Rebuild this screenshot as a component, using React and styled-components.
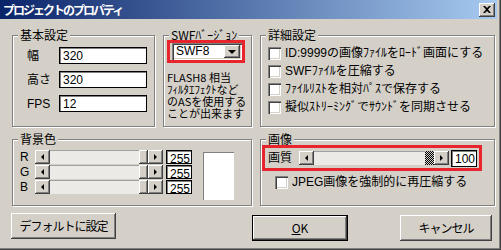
import React from "react";
import styled, { createGlobalStyle, css } from "styled-components";

const GlobalStyle = createGlobalStyle`
  html, body {
    margin: 0;
    padding: 0;
    background: #d4d0c8;
  }
  body {
    font-family: "Liberation Sans", "Noto Sans CJK JP", sans-serif;
    font-size: 12px;
    color: #000;
  }
  * {
    box-sizing: border-box;
  }
`;

const raised = css`
  background: #d4d0c8;
  box-shadow: inset -1px -1px 0 #404040, inset 1px 1px 0 #fff,
    inset -2px -2px 0 #808080, inset 2px 2px 0 #d4d0c8;
`;

const sunken = css`
  background: #fff;
  box-shadow: inset 1px 1px 0 #808080, inset 2px 2px 0 #404040,
    inset -1px -1px 0 #fff, inset -2px -2px 0 #d4d0c8;
`;

const Window = styled.div`
  width: 501px;
  height: 250px;
  background: #d4d0c8;
  display: flex;
  flex-direction: column;
  box-shadow: inset -1px -1px 0 #404040, inset -2px -2px 0 #808080;
`;

const TitleBar = styled.div`
  height: 19px;
  margin-right: 4px;
  padding: 0 2px 0 3px;
  display: flex;
  align-items: center;
  justify-content: space-between;
  background: linear-gradient(to right, #0a246a, #a6caf0);
`;

const TitleText = styled.span`
  color: #fff;
  font-family: "Noto Sans CJK JP", sans-serif;
  font-weight: bold;
  font-size: 12px;
  line-height: 14px;
  letter-spacing: -2px;
`;

const CloseButton = styled.div`
  ${raised};
  width: 16px;
  height: 14px;
  display: flex;
  align-items: center;
  justify-content: center;
`;

const Body = styled.div`
  flex: 1;
  display: grid;
  grid-template-columns: 143px 89px 235px;
  grid-template-rows: 99px 74px auto;
  column-gap: 8px;
  row-gap: 5px;
  padding: 9px 6px 0 12px;
`;

const Group = styled.fieldset`
  margin: 0;
  padding: 0;
  min-width: 0;
  border: 1px solid #808080;
  box-shadow: 1px 1px 0 #fff, inset 1px 1px 0 #fff;
  grid-column: ${(p) => p.$span || "auto"};
`;

const Legend = styled.legend`
  margin-left: 5px;
  padding: 0 2px;
  background: #d4d0c8;
  font-family: "Noto Sans CJK JP", sans-serif;
  font-size: 12px;
  line-height: 14px;
`;

const FieldRows = styled.div`
  display: flex;
  flex-direction: column;
  gap: 7px;
  padding: 5px 0 0 14px;
`;

const FieldRow = styled.div`
  display: flex;
  align-items: center;
`;

const FieldLabel = styled.span`
  width: 32px;
  line-height: 14px;
`;

const TextBox = styled.div`
  width: ${(p) => p.$w || 88}px;
  height: ${(p) => p.$h || 17}px;
  padding: 2px 0 0 3px;
  background: #fff;
  border: 1px solid #000;
  box-shadow: inset 1px 1px 0 #808080;
  line-height: 13px;
  font-size: 12px;
  flex: none;
`;

const Highlight = styled.div`
  border: 3px solid #e8242c;
  display: flex;
  align-items: center;
`;

const SwfHighlight = styled(Highlight)`
  width: 78px;
  margin: -2px 0 0 3px;
  padding: 0 0 0 2px;
  height: 23px;
`;

const Combo = styled.div`
  ${sunken};
  width: 71px;
  height: 17px;
  display: flex;
  align-items: center;
  justify-content: space-between;
  padding: 2px 2px 2px 4px;
  line-height: 13px;
`;

const ComboArrow = styled.div`
  ${raised};
  width: 16px;
  height: 13px;
  display: flex;
  align-items: center;
  justify-content: center;
`;

const Note = styled.p`
  margin: 8px 0 0 3px;
  font-family: "Noto Sans CJK JP", sans-serif;
  font-size: 11px;
  line-height: 12px;
  white-space: nowrap;
`;

const CheckList = styled.div`
  display: flex;
  flex-direction: column;
  gap: 5px;
  padding: 5px 0 0 7px;
`;

const CheckRow = styled.label`
  display: flex;
  align-items: center;
  gap: 4px;
  line-height: 13px;
  white-space: nowrap;
  margin-left: ${(p) => p.$indent || 0}px;
`;

const CheckBox = styled.span`
  ${sunken};
  width: 13px;
  height: 13px;
  flex: none;
`;

const ColorRows = styled.div`
  display: flex;
  gap: 11px;
  padding: 4px 0 0 7px;
`;

const Sliders = styled.div`
  display: flex;
  flex-direction: column;
  gap: 1px;
`;

const SliderRow = styled.div`
  display: flex;
  align-items: center;
  gap: 3px;
`;

const ChannelLabel = styled.span`
  width: 12px;
  line-height: 14px;
`;

const ScrollBar = styled.div`
  width: ${(p) => p.$w}px;
  height: 14px;
  flex: none;
  display: flex;
  background: #eceae6;
  box-shadow: inset 0 1px 0 #a0a0a0;
`;

const ScrollButton = styled.div`
  ${raised};
  width: 15px;
  height: 14px;
  flex: none;
  display: flex;
  align-items: center;
  justify-content: center;
`;

const Track = styled.div`
  flex: 1;
`;

const Thumb = styled.div`
  width: 9px;
  height: 14px;
  flex: none;
  ${(p) =>
    p.$dither
      ? css`
          background: repeating-conic-gradient(#000 0 25%, #d4d0c8 0 50%) 0 0 / 2px 2px;
        `
      : raised}
`;

const Swatch = styled.div`
  width: 31px;
  height: 48px;
  margin-top: 2px;
  background: #fff;
  box-shadow: inset 1px 1px 0 #808080, inset -1px -1px 0 #fff;
`;

const QualityHighlight = styled(Highlight)`
  margin: -1px 0 0 1px;
  width: 220px;
  height: 26px;
  padding: 0 0 0 3px;
  gap: 2px;
`;

const QualityLabel = styled.span`
  width: 29px;
  line-height: 14px;
`;

const ButtonRow = styled.div`
  grid-column: 1 / -1;
  display: flex;
  align-items: flex-start;
  margin-top: 2px;
  margin-left: -1px;
`;

const PushButton = styled.div`
  ${raised};
  width: ${(p) => p.$w}px;
  height: 26px;
  margin-left: ${(p) => p.$ml || 0}px;
  margin-top: ${(p) => p.$mt || 0}px;
  display: flex;
  align-items: center;
  justify-content: center;
  font-family: "Noto Sans CJK JP", sans-serif;
  font-size: 12px;
  line-height: 14px;
  letter-spacing: -1px;
  ${(p) =>
    p.$default &&
    css`
      border: 1px solid #000;
      letter-spacing: 0;
    `}
`;

const Arrow = ({ dir }) => {
  const pts = {
    left: "5,1 2,4 5,7",
    right: "2,1 5,4 2,7",
    down: "0,2 8,2 4,6",
  }[dir];
  return (
    <svg width="8" height="8" viewBox="0 0 8 8">
      <polygon points={pts} fill="#000" />
    </svg>
  );
};

const Scroller = ({ width, dither }) => (
  <ScrollBar $w={width}>
    <ScrollButton>
      <Arrow dir="left" />
    </ScrollButton>
    <Track />
    <Thumb $dither={dither} />
    <ScrollButton>
      <Arrow dir="right" />
    </ScrollButton>
  </ScrollBar>
);

const basics = [
  ["幅", "320"],
  ["高さ", "320"],
  ["FPS", "12"],
];

const details = [
  "ID:9999の画像ﾌｧｲﾙをﾛｰﾄﾞ画面にする",
  "SWFﾌｧｲﾙを圧縮する",
  "ﾌｧｲﾙﾘｽﾄを相対ﾊﾟｽで保存する",
  "擬似ｽﾄﾘｰﾐﾝｸﾞでｻｳﾝﾄﾞを同期させる",
];

export default function App() {
  return (
    <>
      <GlobalStyle />
      <Window>
        <TitleBar>
          <TitleText>プロジェクトのプロパティ</TitleText>
          <CloseButton>
            <svg width="8" height="7" viewBox="0 0 8 7">
              <path d="M0 0h2l2 2 2-2h2L5 3.5 8 7H6L4 5 2 7H0l3-3.5z" fill="#000" />
            </svg>
          </CloseButton>
        </TitleBar>
        <Body>
          <Group>
            <Legend>基本設定</Legend>
            <FieldRows>
              {basics.map(([label, value]) => (
                <FieldRow key={label}>
                  <FieldLabel>{label}</FieldLabel>
                  <TextBox>{value}</TextBox>
                </FieldRow>
              ))}
            </FieldRows>
          </Group>

          <Group>
            <Legend>SWFﾊﾞｰｼﾞｮﾝ</Legend>
            <SwfHighlight>
              <Combo>
                SWF8
                <ComboArrow>
                  <Arrow dir="down" />
                </ComboArrow>
              </Combo>
            </SwfHighlight>
            <Note>
              FLASH8 相当
              <br />
              ﾌｨﾙﾀｴﾌｪｸﾄなど
              <br />
              のASを使用する
              <br />
              ことが出来ます
            </Note>
          </Group>

          <Group>
            <Legend>詳細設定</Legend>
            <CheckList>
              {details.map((text) => (
                <CheckRow key={text}>
                  <CheckBox />
                  {text}
                </CheckRow>
              ))}
            </CheckList>
          </Group>

          <Group $span="1 / 3">
            <Legend>背景色</Legend>
            <ColorRows>
              <Sliders>
                {["R", "G", "B"].map((c) => (
                  <SliderRow key={c}>
                    <ChannelLabel>{c}</ChannelLabel>
                    <Scroller width={128} />
                    <TextBox $w={26} $h={14}>
                      255
                    </TextBox>
                  </SliderRow>
                ))}
              </Sliders>
              <Swatch />
            </ColorRows>
          </Group>

          <Group>
            <Legend>画像</Legend>
            <QualityHighlight>
              <QualityLabel>画質</QualityLabel>
              <Scroller width={150} dither />
              <TextBox $w={26} $h={17}>
                100
              </TextBox>
            </QualityHighlight>
            <CheckList>
              <CheckRow $indent={7}>
                <CheckBox />
                JPEG画像を強制的に再圧縮する
              </CheckRow>
            </CheckList>
          </Group>

          <ButtonRow>
            <PushButton $w={105}>デフォルトに設定</PushButton>
            <PushButton $w={96} $ml={136} $mt={2} $default>
              <u>O</u>K
            </PushButton>
            <PushButton $w={92} $ml={52} $mt={2}>
              キャンセル
            </PushButton>
          </ButtonRow>
        </Body>
      </Window>
    </>
  );
}
